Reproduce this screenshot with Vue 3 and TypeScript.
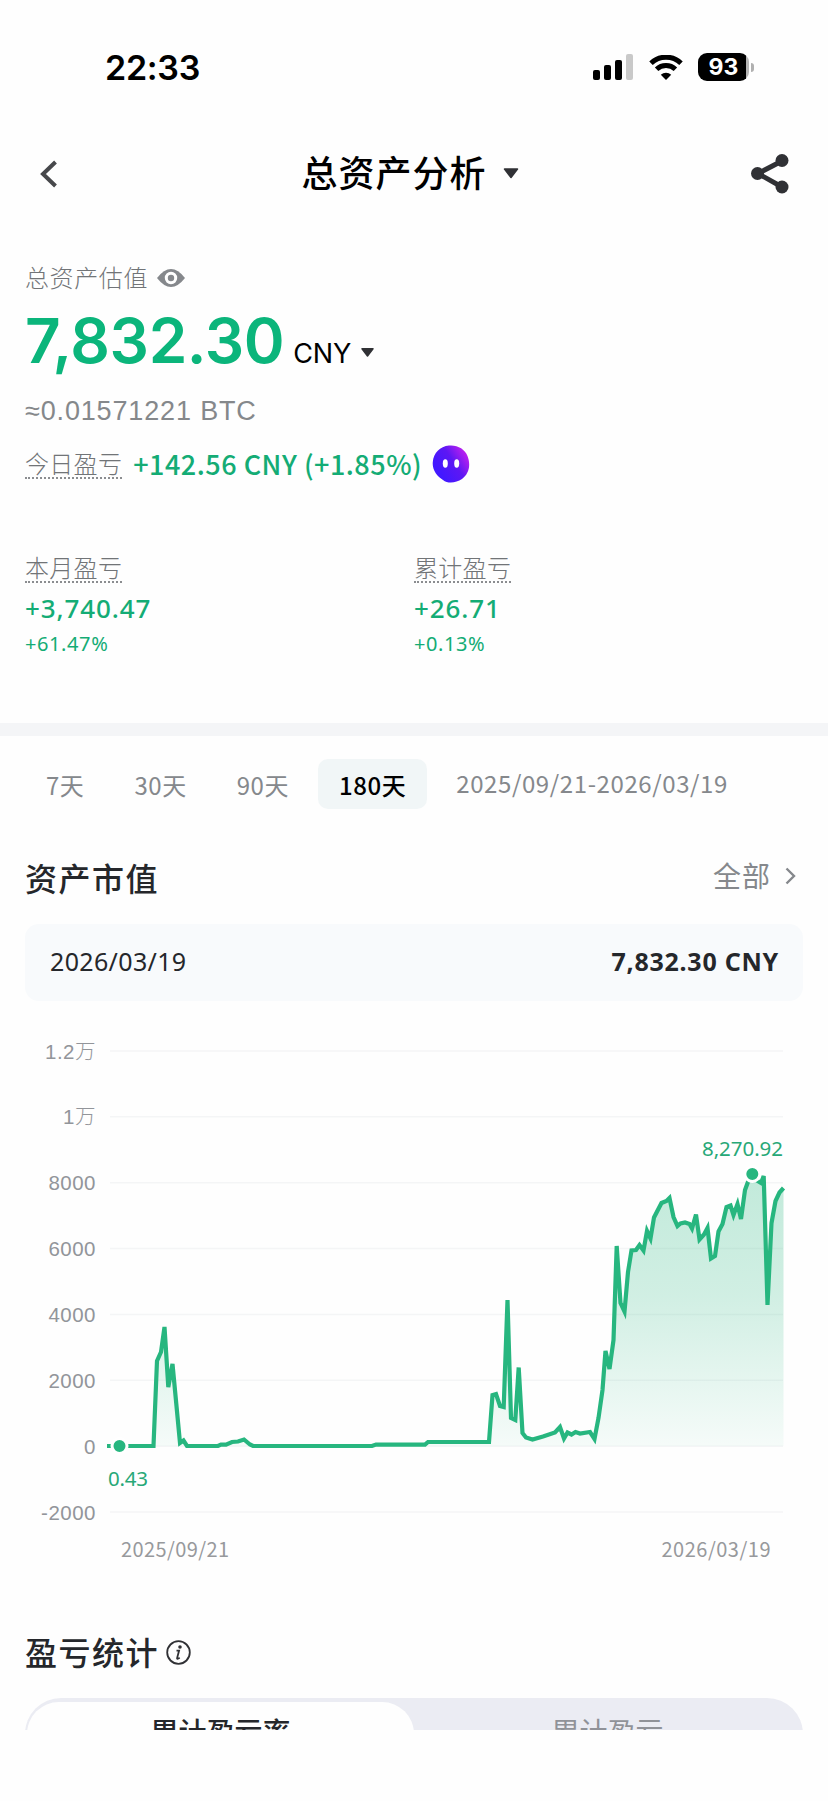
<template>
  <div class="page">
    <header class="status-bar">
      <span class="time">22:33</span>
      <div class="status-icons">
        <svg class="signal" width="41" height="26" viewBox="0 0 41 26">
          <rect x="0" y="16" width="7" height="10" rx="2" />
          <rect x="11" y="11" width="7" height="15" rx="2" />
          <rect x="22" y="6" width="7" height="20" rx="2" />
          <rect x="33" y="0" width="7" height="26" rx="2" fill="#c9c9c9" />
        </svg>
        <svg class="wifi" width="34" height="25" viewBox="0 0 34 25">
          <path d="M2 8.2a21.6 21.6 0 0 1 30 0" />
          <path d="M7.6 14.2a13.6 13.6 0 0 1 18.8 0" />
          <path d="M17 25l-5.200-5.300a7.600 7.600 0 0 1 10.400 0z" class="solid" />
        </svg>
        <div class="battery">
          <span class="battery-level">93</span>
          <i class="battery-cap" />
        </div>
      </div>
    </header>

    <nav class="nav-bar">
      <svg class="back" width="18" height="28" viewBox="0 0 18 28">
        <path d="M15.500 2L3 14l12.500 12" />
      </svg>
      <div class="nav-title">
        <h1>总资产分析</h1>
        <svg width="16" height="11" viewBox="0 0 16 11">
          <path d="M1.500 1h13L8 9.500z" />
        </svg>
      </div>
      <svg class="share" width="38" height="40" viewBox="0 0 38 40">
        <path d="M31 7L7 19.500L31 33" />
        <circle cx="31" cy="6.500" r="6.500" />
        <circle cx="6.500" cy="19.500" r="6.500" />
        <circle cx="31" cy="33" r="6.500" />
      </svg>
    </nav>

    <section class="overview">
      <div class="estimate-label">
        <span>总资产估值</span>
        <svg width="28" height="20" viewBox="0 0 28 20">
          <path d="M0 10Q7 1 14 1T28 10Q21 19 14 19T0 10z" fill="#85888c" />
          <circle cx="14" cy="10" r="4.700" fill="none" stroke="#fff" stroke-width="3" />
        </svg>
      </div>
      <div class="total">
        <strong>7,832.30</strong>
        <span class="currency">CNY</span>
        <svg width="13" height="9" viewBox="0 0 13 9">
          <path d="M1 .8h11L6.500 8z" />
        </svg>
      </div>
      <div class="btc">≈0.01571221 BTC</div>
      <div class="today">
        <span class="dotted">今日盈亏</span>
        <span class="today-value">+142.56 CNY (+1.85%)</span>
        <svg class="mascot" width="38" height="38" viewBox="0 0 38 38">
          <defs>
            <linearGradient id="mascot-fill" x1=".2" y1=".7" x2=".95" y2=".2">
              <stop offset="0" stop-color="#4318ff" />
              <stop offset=".5" stop-color="#5d17f4" />
              <stop offset="1" stop-color="#c321ee" />
            </linearGradient>
          </defs>
          <path
            d="M17 .6C25-.3 33 4 35.500 11C39 20 37 29 30 34C24 38 16 39 11 35C5 31 0 25 .8 17C1.500 8 8 1.500 17 .6z"
            fill="url(#mascot-fill)"
          />
          <ellipse cx="13.300" cy="18.500" rx="2.500" ry="4.200" fill="#fff" />
          <ellipse cx="24.700" cy="18.500" rx="2.500" ry="4.200" fill="#fff" />
        </svg>
      </div>
      <div class="stats">
        <div v-for="s in stats" :key="s.label" class="stat">
          <span class="dotted">{{ s.label }}</span>
          <b>{{ s.amount }}</b>
          <small>{{ s.percent }}</small>
        </div>
      </div>
    </section>

    <div class="band" />

    <div class="ranges">
      <button
        v-for="r in ranges"
        :key="r"
        :class="{ active: r === activeRange }"
        @click="activeRange = r"
      >{{ r }}</button>
      <span class="range-dates">2025/09/21-2026/03/19</span>
    </div>

    <div class="section-head">
      <h2>资产市值</h2>
      <div class="filter">
        <span>全部</span>
        <svg width="11" height="18" viewBox="0 0 11 18">
          <path d="M1.500 1.500L9 9l-7.500 7.500" />
        </svg>
      </div>
    </div>

    <div class="summary">
      <span>2026/03/19</span>
      <b>7,832.30 CNY</b>
    </div>

    <svg class="chart" width="828" height="560" viewBox="0 1020 828 560">
      <defs>
        <linearGradient id="area-fill" gradientUnits="userSpaceOnUse" x1="0" y1="1174" x2="0" y2="1446">
          <stop offset="0" stop-color="#27b67f" stop-opacity=".28" />
          <stop offset=".45" stop-color="#27b67f" stop-opacity=".21" />
          <stop offset="1" stop-color="#27b67f" stop-opacity=".04" />
        </linearGradient>
      </defs>
      <g v-for="t in ticks" :key="t.label">
        <line x1="110" x2="783" :y1="t.y" :y2="t.y" class="grid" />
        <text x="96" :y="t.y + 7.5" class="tick">{{ t.label }}</text>
      </g>
      <path :d="areaPath" fill="url(#area-fill)" />
      <path :d="linePath" class="line" />
      <circle cx="119.500" cy="1446" r="7.500" class="marker" />
      <circle cx="752.300" cy="1174" r="7.500" class="marker" />
      <text x="108" y="1486" textLength="40" class="mark">0.43</text>
      <text x="702" y="1156" textLength="81" class="mark">8,270.92</text>
      <text x="121" y="1557" textLength="108" class="date">2025/09/21</text>
      <text x="661.500" y="1557" textLength="109" class="date">2026/03/19</text>
    </svg>

    <div class="pnl-head">
      <h2>盈亏统计</h2>
      <svg width="25" height="25" viewBox="0 0 25 25">
        <circle cx="12.500" cy="12.500" r="11.300" />
        <path d="M10.500 10.600h2.600l-2 7.500q-.3 1.500 2.600-.4" />
        <circle cx="14" cy="7" r=".9" class="dot" />
      </svg>
    </div>

    <div class="switch-clip">
      <div class="switch">
        <span class="on">累计盈亏率</span>
        <span>累计盈亏</span>
      </div>
    </div>
  </div>
</template>

<script setup lang="ts">
import { ref, computed } from 'vue'

const stats = [
  { label: '本月盈亏', amount: '+3,740.47', percent: '+61.47%' },
  { label: '累计盈亏', amount: '+26.71', percent: '+0.13%' },
]

const ranges = ['7天', '30天', '90天', '180天']
const activeRange = ref('180天')

const ticks = ['1.2万', '1万', '8000', '6000', '4000', '2000', '0', '-2000'].map((label, i) => ({
  label,
  y: 1051 + i * 65.86,
}))

const points: [number, number][] = [
  [107, 1446], [153.5, 1446], [157, 1361], [161, 1352], [164.5, 1327], [168.3, 1387], [172.5, 1364],
  [180, 1443], [183.5, 1440.5], [187, 1446], [218, 1446], [221, 1444.6], [226, 1444.6], [232, 1442],
  [238, 1441.5], [244, 1439.5], [250, 1444.5], [253, 1446], [372, 1446], [376, 1444.6], [425, 1444.6],
  [428, 1442], [489, 1442], [492.5, 1395], [496, 1394], [500, 1406], [503.7, 1407], [507.5, 1300],
  [511, 1418], [515.3, 1420], [518.7, 1367.5], [522.5, 1433], [526, 1437.5], [532.5, 1439.5],
  [543, 1436.5], [555, 1432.5], [560, 1427], [564, 1438.5], [567.5, 1432.5], [571.5, 1434.5],
  [575.5, 1432], [580, 1433.5], [590, 1432], [594.5, 1439], [598.5, 1418], [602.5, 1390],
  [605.5, 1351], [609.5, 1369], [613.5, 1340], [616.7, 1246], [620.5, 1303], [624.5, 1311.5],
  [628, 1272], [631.5, 1250.5], [636, 1250], [639.5, 1245], [643.5, 1250.5], [647, 1231],
  [650.5, 1238.5], [654, 1217.5], [661.5, 1203], [666.5, 1201], [669.5, 1198], [673.5, 1217],
  [677.5, 1226], [680.5, 1223.5], [685, 1222.5], [689.5, 1224], [692, 1228.5], [696, 1214.5],
  [699.5, 1239.5], [704, 1234.5], [707.5, 1228], [711, 1258.5], [715, 1256], [718.5, 1231.5],
  [722.5, 1224], [726.5, 1207], [730.5, 1205.5], [733.5, 1215], [737.5, 1204], [741, 1219],
  [745, 1190], [748.5, 1180.5], [752.3, 1174], [756, 1180], [761, 1183], [763.7, 1176],
  [767.5, 1305], [771.5, 1223], [775.5, 1201], [779.5, 1192.5], [783.5, 1188],
]

const linePath = computed(() => 'M' + points.map(p => p.join(' ')).join('L'))
const areaPath = computed(() => linePath.value + 'L783.5 1446L107 1446Z')
</script>

<style>
body {
  margin: 0;
  background: #fff;
}
</style>

<style scoped>
.page {
  width: 828px;
  height: 1801px;
  overflow: hidden;
  background: #fefefe;
  font-family: "Noto Sans CJK SC", "Noto Sans", sans-serif;
  color: #25272b;
}
.page svg { flex: none; }
h1, h2 { margin: 0; font-weight: 500; }

.status-bar {
  display: flex;
  align-items: center;
  justify-content: space-between;
  height: 134px;
  padding: 0 74px 0 105px;
  color: #000;
}
.time {
  padding-top: 1px;
  font: 600 34px/40px Inter, sans-serif;
  letter-spacing: -0.3px;
}
.status-icons { display: flex; align-items: center; }
.wifi { margin: 0 15px; }
.wifi path { fill: none; stroke: #000; stroke-width: 5; }
.wifi .solid { fill: #000; stroke: none; }
.battery { display: flex; align-items: center; gap: 2px; }
.battery-level {
  width: 51px;
  height: 28px;
  border-radius: 9px;
  background: linear-gradient(90deg, #000 94%, #b5b5b5 94%);
  color: #fff;
  font: 700 23px/29px Inter, sans-serif;
  text-align: center;
}
.battery-cap {
  width: 3px;
  height: 9px;
  border-radius: 0 4px 4px 0;
  background: #b0b0b0;
}

.nav-bar {
  display: flex;
  align-items: center;
  justify-content: space-between;
  height: 78px;
  padding: 1px 39px 0 40px;
  box-sizing: border-box;
}
.back path { fill: none; stroke: #47484b; stroke-width: 4; }
.nav-title {
  display: flex;
  align-items: center;
  gap: 16px;
  margin-left: 11px;
}
.nav-title h1 {
  margin-top: -5px;
  font-size: 36px;
  line-height: 48px;
  letter-spacing: 1px;
  color: #000;
}
.nav-title path, .total path { fill: #303135; stroke: #303135; stroke-width: 1.5; stroke-linejoin: round; }
.share path { fill: none; stroke: #303135; stroke-width: 5; }
.share circle { fill: #303135; }

.overview {
  height: 511px;
  padding: 46px 25px 0;
  box-sizing: border-box;
}
.estimate-label {
  display: flex;
  align-items: center;
  gap: 9px;
  height: 40px;
  font-size: 24px;
  font-weight: 300;
  letter-spacing: 0.6px;
  color: #717477;
}
.estimate-label span { margin-top: -3px; }
.total {
  display: flex;
  align-items: baseline;
  height: 84px;
  line-height: 85px;
}
.total strong {
  font-family: Inter, sans-serif;
  font-size: 62px;
  font-weight: 600;
  letter-spacing: -0.4px;
  color: #0bb57b;
}
.currency {
  margin: 0 10px 0 9px;
  font-family: Inter, sans-serif;
  font-size: 27px;
  letter-spacing: -0.2px;
  color: #000;
}
.total svg { align-self: center; margin-top: 25px; }
.btc {
  height: 52px;
  font-family: "Liberation Sans", sans-serif;
  font-size: 27px;
  line-height: 58px;
  letter-spacing: 0.85px;
  color: #85888b;
}
.today {
  display: flex;
  align-items: center;
  height: 60px;
}
.dotted {
  height: 28px;
  border-bottom: 2px dotted #8b8d90;
  font-size: 24px;
  line-height: 27px;
  font-weight: 300;
  letter-spacing: 0.3px;
  color: #717477;
}
.today-value {
  margin: -2px 10px 0 11px;
  font-size: 27px;
  font-weight: 500;
  letter-spacing: 0.5px;
  white-space: nowrap;
  color: #14ac75;
}
.stats {
  display: grid;
  grid-template-columns: 1fr 1fr;
  margin-top: 59px;
}
.stat {
  display: flex;
  flex-direction: column;
  align-items: flex-start;
}
.stat b {
  margin-top: 7px;
  font: 500 26px/36px "Noto Sans", sans-serif;
  letter-spacing: 0.9px;
  color: #14ac75;
}
.stat small {
  font: 400 20px/36px "Noto Sans", sans-serif;
  letter-spacing: 0.6px;
  color: #14ac75;
}

.band { height: 13px; background: #f4f5f7; }

.ranges {
  display: flex;
  align-items: center;
  height: 96px;
  padding-left: 25px;
}
.ranges button {
  height: 50px;
  padding: 0 21px;
  margin-right: 8px;
  border: 0;
  border-radius: 10px;
  background: none;
  font: 400 24px/47px "Noto Sans CJK SC", sans-serif;
  letter-spacing: 0.55px;
  color: #85888c;
}
.ranges .active {
  margin-right: 29px;
  background: #f1f6f7;
  font-weight: 500;
  color: #000;
}
.range-dates {
  margin-top: -4px;
  font-size: 24px;
  letter-spacing: 0.6px;
  color: #85888c;
}

.section-head {
  display: flex;
  justify-content: space-between;
  align-items: center;
  height: 92px;
  padding: 0 32px 0 25px;
}
.section-head h2, .pnl-head h2 {
  margin-top: -2px;
  font-size: 32px;
  line-height: 44px;
  letter-spacing: 1.5px;
}
.filter {
  display: flex;
  align-items: center;
  gap: 14px;
  margin-top: -4px;
  font-size: 28px;
  letter-spacing: 1px;
  color: #85888c;
}
.filter span { margin-top: -3px; }
.filter path { fill: none; stroke: #85888c; stroke-width: 2.4; }

.summary {
  display: flex;
  align-items: center;
  justify-content: space-between;
  height: 77px;
  margin: 0 25px;
  padding: 0 24px 0 25px;
  border-radius: 14px;
  background: #f8fafc;
  font: 400 25px/74px "Noto Sans", sans-serif;
  letter-spacing: 0.35px;
}
.summary span, .summary b { height: 77px; }
.summary b { font-weight: 700; letter-spacing: 0.75px; }

.chart { display: block; margin-top: 19px; }
.grid { stroke: #f4f5f6; stroke-width: 1.5; }
.tick {
  font-family: "Liberation Sans", "Noto Sans CJK SC", sans-serif;
  font-size: 20.5px;
  font-weight: 300;
  letter-spacing: 0.5px;
  text-anchor: end;
  fill: #92959a;
}
.line { fill: none; stroke: #27b67f; stroke-width: 4.2; stroke-linejoin: miter; }
.marker { fill: #27b67f; stroke: #fff; stroke-width: 3; }
.mark { font-family: "Noto Sans", sans-serif; font-size: 20.5px; fill: #27a877; }
.date { font-size: 20px; fill: #97999c; }

.pnl-head {
  display: flex;
  align-items: center;
  gap: 7px;
  height: 118px;
  padding: 26px 25px 0;
  box-sizing: border-box;
}
.pnl-head svg { fill: none; stroke: #303135; stroke-width: 1.8; }
.pnl-head .dot { fill: #303135; }

.switch-clip {
  height: 32px;
  margin: 0 25px;
  overflow: hidden;
}
.switch {
  display: flex;
  height: 72px;
  padding: 4px 2px;
  box-sizing: border-box;
  border-radius: 36px;
  background: #ebecf3;
}
.switch span {
  flex: 1;
  border-radius: 32px;
  text-align: center;
  font-size: 28px;
  line-height: 59px;
  color: #909298;
}
.switch .on {
  background: #fefefe;
  font-weight: 500;
  color: #25272b;
}
</style>
